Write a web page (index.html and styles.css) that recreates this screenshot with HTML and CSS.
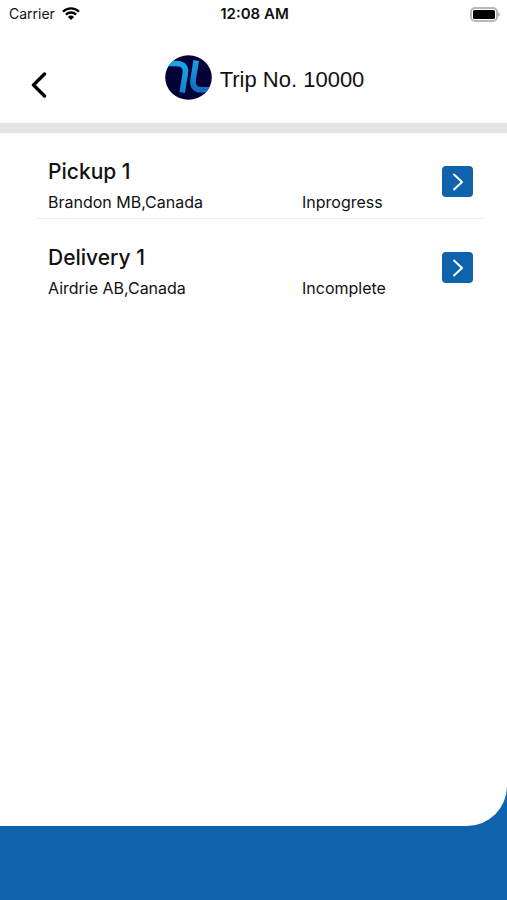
FILE: index.html
```html
<!DOCTYPE html>
<html lang="en">
<head>
<meta charset="utf-8">
<meta name="viewport" content="width=device-width, initial-scale=1">
<title>Trip No. 10000</title>
<link rel="stylesheet" href="styles.css">
</head>
<body>
<div class="panel">
  <div class="status-bar">
    <div class="carrier">
      <span>Carrier</span>
      <svg class="wifi" viewBox="0 0 18 14" aria-hidden="true">
        <path d="M1 4.7a11.4 11.4 0 0 1 16 0M3.9 7.6a7.3 7.3 0 0 1 10.2 0" fill="none" stroke="#000" stroke-width="2.3"/>
        <path d="M5.9 9.9a4.4 4.4 0 0 1 6.2 0L9 13z"/>
      </svg>
    </div>
    <time class="clock">12:08 AM</time>
    <svg class="battery" viewBox="0 0 30 15" aria-hidden="true">
      <rect x="1" y="1" width="26" height="13" rx="4" fill="#fff" stroke="#b8b8b8" stroke-width="2"/>
      <rect x="3" y="3" width="22" height="9" rx="1.6"/>
      <path d="M28 5.2q2 .9 2 2.3t-2 2.3z" fill="#b8b8b8"/>
    </svg>
  </div>
  <header class="header">
    <button class="back" type="button" aria-label="Back">
      <svg viewBox="0 0 16 26" aria-hidden="true"><path d="M13.5 2 2.5 13l11 11" fill="none" stroke="#000" stroke-width="3.4" stroke-linecap="round" stroke-linejoin="round"/></svg>
    </button>
    <div class="brand">
      <svg class="logo" viewBox="0 0 47 45" aria-hidden="true">
        <defs>
          <clipPath id="disc"><ellipse cx="23.5" cy="22.5" rx="23.3" ry="22.2"/></clipPath>
          <linearGradient id="left" x1="0" y1="0" x2="0" y2="1"><stop offset="0" stop-color="#1ba4e6"/><stop offset="1" stop-color="#1383d4"/></linearGradient>
          <linearGradient id="right" x1="0" y1="0" x2="0" y2="1"><stop offset="0" stop-color="#1ba1e4"/><stop offset="1" stop-color="#126cc2"/></linearGradient>
        </defs>
        <g clip-path="url(#disc)">
          <rect width="47" height="45" fill="#020236"/>
          <path d="M0 8.5H11C18.5 8.5 21.5 12 20.2 19L17.2 37.5" fill="none" stroke="url(#left)" stroke-width="5.6"/>
          <path d="M31.2 5.5 28.2 24C27 31 30 34.8 36 34.8H47" fill="none" stroke="url(#right)" stroke-width="5.6"/>
        </g>
      </svg>
      <h1 class="title">Trip No. 10000</h1>
    </div>
  </header>
  <main>
    <ul class="stops">
      <li class="stop">
        <h2 class="stop-name">Pickup 1</h2>
        <p class="place">Brandon MB,Canada</p>
        <p class="state">Inprogress</p>
        <button class="open" type="button" aria-label="Open Pickup 1">
          <svg viewBox="0 0 12 18" aria-hidden="true"><path d="M2 1.5 10 9l-8 7.5" fill="none" stroke="#fff" stroke-width="2" stroke-linecap="round" stroke-linejoin="round"/></svg>
        </button>
      </li>
      <li class="stop">
        <h2 class="stop-name">Delivery 1</h2>
        <p class="place">Airdrie AB,Canada</p>
        <p class="state">Incomplete</p>
        <button class="open" type="button" aria-label="Open Delivery 1">
          <svg viewBox="0 0 12 18" aria-hidden="true"><path d="M2 1.5 10 9l-8 7.5" fill="none" stroke="#fff" stroke-width="2" stroke-linecap="round" stroke-linejoin="round"/></svg>
        </button>
      </li>
    </ul>
  </main>
</div>
<footer class="footer"></footer>
</body>
</html>
```
FILE: styles.css
```css
* {
  box-sizing: border-box;
}

body {
  display: flex;
  flex-direction: column;
  min-height: 100vh;
  margin: 0;
  background: #0f62ac;
  color: #111;
  font-family: Inter, "Liberation Sans", sans-serif;
}

h1,
h2,
p,
ul {
  margin: 0;
  padding: 0;
}

button {
  display: grid;
  place-items: center;
  padding: 0;
  border: 0;
  background: none;
}

.panel {
  flex: 1;
  background: #fff;
  border-bottom-right-radius: 40px;
}

.footer {
  height: 74px;
}

.status-bar {
  display: grid;
  grid-template-columns: 1fr auto 1fr;
  align-items: center;
  height: 28px;
  padding: 0 7px 0 9px;
  font-size: 14px;
  line-height: 28px;
}

.carrier {
  display: flex;
  align-items: center;
  gap: 7px;
}

.wifi {
  width: 18px;
  height: 14px;
}

.clock {
  font-size: 15px;
  font-weight: 600;
}

.battery {
  justify-self: end;
  width: 30px;
  height: 15px;
}

.header {
  display: grid;
  grid-template-columns: 38px 1fr 38px;
  height: 105px;
  padding: 27px 20px 0;
  border-bottom: 10px solid #e4e4e4;
}

.back {
  height: 60px;
}

.back svg {
  width: 16px;
  height: 26px;
}

.brand {
  display: flex;
  justify-content: center;
  gap: 8px;
  margin-left: 22px;
}

.logo {
  width: 47px;
  height: 45px;
}

.title {
  font-family: "Liberation Sans", Arial, sans-serif;
  font-size: 22px;
  font-weight: 400;
  line-height: 50px;
}

.stops {
  margin: 0 24px 0 36px;
  list-style: none;
}

.stop {
  display: grid;
  grid-template-columns: 254fr 140fr 31px;
  grid-template-rows: 28px 20px;
  row-gap: 6px;
  height: 86px;
  padding: 25px 10px 0 12px;
}

.stop:not(:last-child) {
  border-bottom: 1px solid #eee;
}

.stop-name {
  grid-column: 1 / 3;
  font-size: 21px;
  font-weight: 500;
  line-height: 28px;
}

.place,
.state {
  grid-row: 2;
  font-size: 16px;
  line-height: 20px;
}

.open {
  grid-area: 1 / 3 / 3 / 4;
  width: 31px;
  height: 31px;
  margin-top: 8px;
  border-radius: 4px;
  background: #0f62ac;
}

.open svg {
  width: 12px;
  height: 18px;
}
```
